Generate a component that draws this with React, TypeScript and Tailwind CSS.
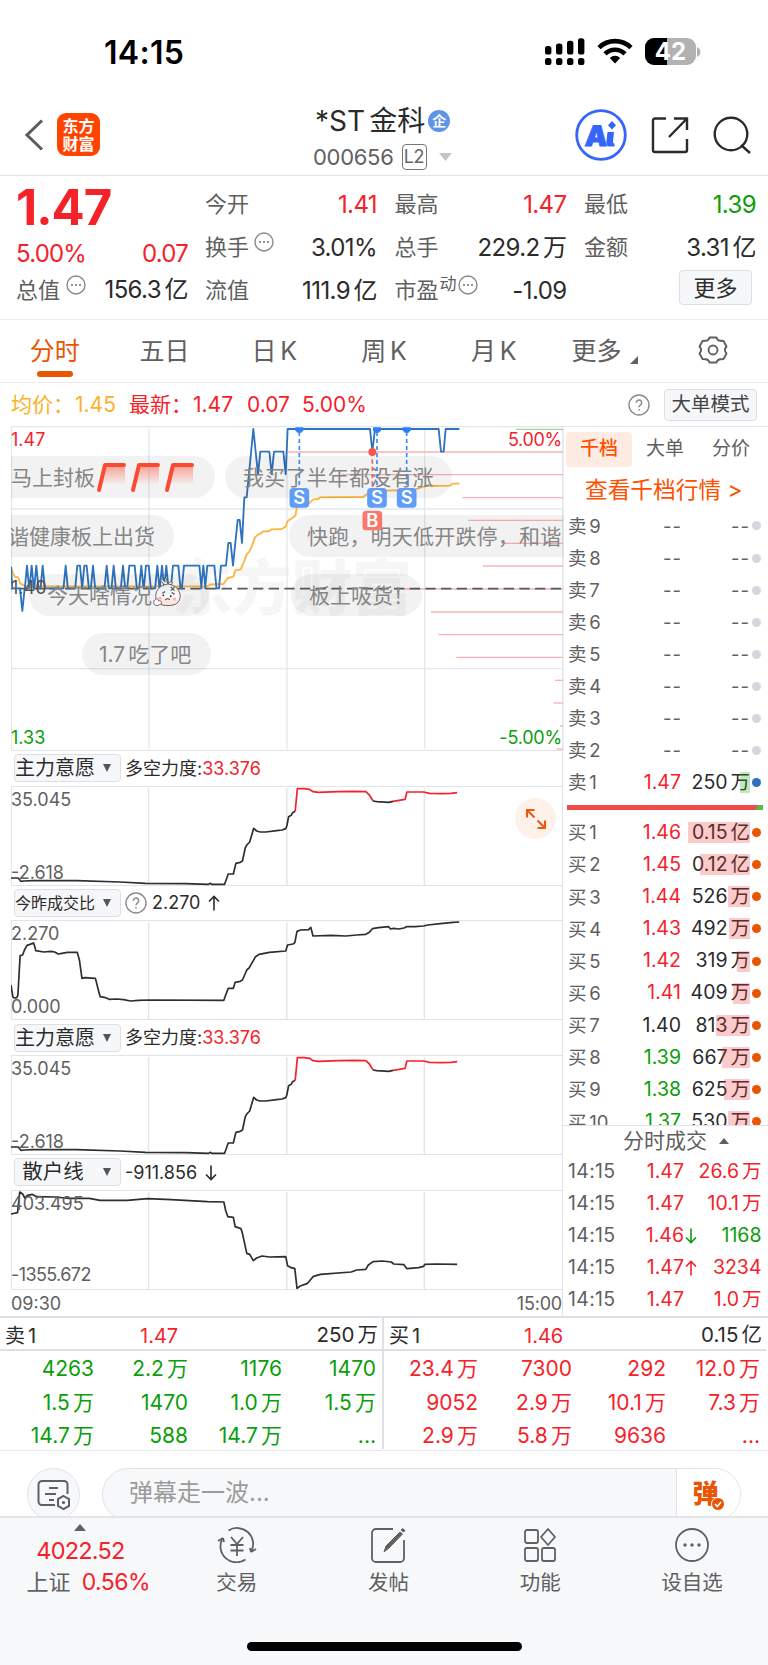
import { Fragment, type ReactNode } from 'react';
import clsx from 'clsx';

const UP = 'text-[#f5222a]';
const DOWN = 'text-[#0a9e0a]';
const INK = 'text-[#2b2b2b]';
const GRAY = 'text-[#606060]';

// 数字与汉字之间留一点空隙
const Txt = ({ children }: { children: string }) => {
  const parts = children.split(/(?<=[0-9A-Z])(?=[\u4e00-\u9fa5])|(?<=[\u4e00-\u9fa5])(?=[0-9A-Z])/);
  return (
    <>
      {parts.map((part, i) => (
        <Fragment key={i}>
          {i > 0 ? <span className="ml-[0.15em]">{part}</span> : part}
        </Fragment>
      ))}
    </>
  );
};

const DotsIcon = ({ className }: { className?: string }) => (
  <svg viewBox="0 0 20 20" className={clsx('h-5 w-5 shrink-0', className)} fill="none">
    <circle cx="10" cy="10" r="9" stroke="#8a8a8a" strokeWidth="1.4" />
    <circle cx="6" cy="10" r="1.1" fill="#777" />
    <circle cx="10" cy="10" r="1.1" fill="#777" />
    <circle cx="14" cy="10" r="1.1" fill="#777" />
  </svg>
);

const HelpIcon = () => (
  <svg viewBox="0 0 22 22" className="h-[22px] w-[22px] shrink-0" fill="none" stroke="#8a8a8a">
    <circle cx="11" cy="11" r="10" strokeWidth="1.4" />
    <path d="M8.3 8.7a2.7 2.7 0 1 1 4.2 2.2c-1 .7-1.5 1.1-1.5 2.4" strokeWidth="1.5" />
    <circle cx="11" cy="15.8" r=".9" fill="#8a8a8a" stroke="none" />
  </svg>
);

/* ---------- 状态栏 ---------- */
const StatusBar = () => (
  <div className="flex h-[90px] shrink-0 items-start justify-between pl-[104px] pr-[67px]">
    <span className="mt-[33px] text-[32px] font-semibold leading-10 tracking-[0.3px] text-black">14:15</span>
    <div className="mt-[38px] flex items-start">
      <svg viewBox="0 0 40 28" className="mr-3 h-7 w-10">
        {[0, 11, 22, 33].map((x, i) => (
          <Fragment key={x}>
            <rect x={x} y={8 - i * 2.6} width="6.4" height={8.5 + i * 2.6} rx="2.6" />
            <rect x={x} y="20" width="6.4" height="7" rx="2.6" />
          </Fragment>
        ))}
      </svg>
      <svg viewBox="0 0 36 26" className="mr-3 h-[26px] w-9" fill="none" stroke="#000" strokeWidth="4.6">
        <path d="M2 9.6A23 23 0 0 1 34 9.6" />
        <path d="M8 15.8a14.3 14.3 0 0 1 20 0" />
        <path d="M18 25.5l-5.2-5.6a7.4 7.4 0 0 1 10.4 0z" fill="#000" stroke="none" />
      </svg>
      <div className="relative flex h-[27px] w-[51px] items-center justify-center overflow-hidden rounded-[9px] bg-[#b2b2b2]">
        <div className="absolute inset-y-0 left-0 w-[22px] bg-black" />
        <span className="relative text-[24px] font-bold leading-none text-white">42</span>
      </div>
      <svg viewBox="0 0 4 10" className="ml-px mt-[9px] h-[10px] w-1">
        <path d="M0 0c2.2.8 3.4 2.6 3.4 5S2.2 9.2 0 10z" fill="#b2b2b2" />
      </svg>
    </div>
  </div>
);

/* ---------- 标题栏 ---------- */
const Header = () => (
  <div className="relative flex h-[86px] shrink-0 items-start justify-between border-b border-[#e2e2e4] pl-[24px] pr-[17px]">
    <div className="flex items-center pt-[23px]">
      <svg viewBox="0 0 20 32" className="h-8 w-5" fill="none" stroke="#5c5c5c" strokeWidth="3">
        <path d="M18 1.5L3 16l15 14.5" />
      </svg>
      <div className="ml-[13px] flex h-[43px] w-[43px] flex-col items-center justify-center rounded-[9px] bg-[#ff4400] text-[16px] font-bold leading-[18px] text-white">
        <span>东方</span>
        <span>财富</span>
      </div>
    </div>
    <div className="absolute left-[315px] top-[15px]">
      <div className="flex items-center">
        <span className={clsx('whitespace-nowrap text-[28px] leading-8', INK)}>
          <Txt>*ST金科</Txt>
        </span>
        <span className="ml-[3px] flex h-[22px] w-[22px] items-center justify-center rounded-full bg-[#6093ea] text-[14px] font-bold leading-none text-white">
          企
        </span>
      </div>
      <div className="-ml-[2px] mt-[6px] flex items-center">
        <span className={clsx('text-[22px] leading-7 tracking-[-0.3px]', GRAY)}>000656</span>
        <span className="ml-2 flex h-[26px] w-[25px] items-center justify-center rounded border-[1.5px] border-[#777] text-[18px] leading-none tracking-tight text-[#666]">
          L2
        </span>
        <svg viewBox="0 0 13 8" className="ml-3 h-2 w-[13px]">
          <path d="M0 0h13L6.5 8z" fill="#c4c4c4" />
        </svg>
      </div>
    </div>
    <div className="flex items-center pt-[19px]">
      <svg viewBox="0 0 52 52" className="mr-6 h-[52px] w-[52px]">
        <circle cx="26" cy="26" r="24.3" fill="none" stroke="#3565fb" strokeWidth="2.8" />
        <text x="10" y="37" fontFamily="Inter" fontSize="28" fontWeight="900" fill="#3565fb" stroke="#3565fb" strokeWidth="1" transform="skewX(-4) translate(2 0)">A</text>
        <path d="M32.5 23h6.500l-1 10q0 1.500 1.500 1.500v3h-5q-3.500 0-3.200-4z" fill="#3565fb" />
        <path d="M37 12l4 4.200-4 4.200-4-4.200z" fill="#3565fb" />
      </svg>
      <svg viewBox="0 0 38 38" className="mr-6 h-[38px] w-[38px]" fill="none" stroke="#2b2b2b" strokeWidth="2.400">
        <path d="M15 2.500H4a2 2 0 0 0-2 2V34a2 2 0 0 0 2 2h30a2 2 0 0 0 2-2V23" />
        <path d="M23 2.500h13V14M36 2.500L18 21" />
      </svg>
      <svg viewBox="0 0 38 38" className="h-[38px] w-[38px]" fill="none" stroke="#2b2b2b" strokeWidth="2.400">
        <circle cx="18" cy="18" r="16.300" />
        <path d="M28 29l9 8" />
      </svg>
    </div>
  </div>
);

/* ---------- 行情摘要 ---------- */
type QuoteCell = { label: ReactNode; value: string; color?: string };

const QUOTES: QuoteCell[][] = [
  [
    { label: '今开', value: '1.41', color: UP },
    {
      label: (
        <>
          换手
          <DotsIcon className="-mt-3 ml-[5px]" />
        </>
      ),
      value: '3.01%',
    },
    { label: '流值', value: '111.9亿' },
  ],
  [
    { label: '最高', value: '1.47', color: UP },
    { label: '总手', value: '229.2万' },
    {
      label: (
        <>
          市盈
          <span className="-mt-3 ml-px text-[17px] leading-none">动</span>
          <DotsIcon className="-mt-3 ml-px" />
        </>
      ),
      value: '-1.09',
    },
  ],
  [
    { label: '最低', value: '1.39', color: DOWN },
    { label: '金额', value: '3.31亿' },
  ],
];

const QuoteRow = ({ label, value, color = INK }: QuoteCell) => (
  <div className="flex h-[43px] items-center justify-between">
    <span className={clsx('flex items-center text-[22px]', GRAY)}>{label}</span>
    <span className={clsx('whitespace-nowrap text-[24px] tracking-[-0.6px]', color)}>
      <Txt>{value}</Txt>
    </span>
  </div>
);

const QuoteSummary = () => (
  <div className="flex h-[144px] shrink-0 border-b border-[#ececee] pl-4 pr-3 pt-[7px]">
    <div className="w-[172px]">
      <div className={clsx('mt-px h-[48px] text-[49px] font-bold leading-[48px] tracking-[-1px]', UP)}>1.47</div>
      <div className={clsx('mt-[8px] flex h-[28px] items-center justify-between text-[24px] tracking-[-0.8px]', UP)}>
        <span>5.00%</span>
        <span>0.07</span>
      </div>
      <div className="flex h-[44px] items-center justify-between">
        <span className={clsx('flex items-center text-[22px]', GRAY)}>
          总值
          <DotsIcon className="-mt-[10px] ml-[6px]" />
        </span>
        <span className={clsx('whitespace-nowrap text-[24px] tracking-[-0.6px]', INK)}>
          <Txt>156.3亿</Txt>
        </span>
      </div>
    </div>
    <div className="ml-[17px] grid flex-1 grid-cols-[172px_172px_172px] gap-x-[17.5px]">
      {QUOTES.map((col, i) => (
        <div key={i}>
          {col.map((cell) => (
            <QuoteRow key={cell.value} {...cell} />
          ))}
          {i === 2 && (
            <div className="mr-1 mt-[1px] flex justify-end">
              <button className={clsx('h-[35px] w-[73px] rounded border border-[#dcdfe5] bg-[#f6f7f9] text-[22px] leading-none', INK)}>
                更多
              </button>
            </div>
          )}
        </div>
      ))}
    </div>
  </div>
);

/* ---------- 周期切换 ---------- */
const PERIODS = ['五日', '日K', '周K', '月K'];

const PeriodTabs = () => (
  <div className="grid h-[63px] shrink-0 grid-cols-7 border-b border-[#ececee] text-[25px]">
    <div className="flex flex-col items-center">
      <span className="mt-[12px] leading-[38px] text-[#ea5504]">分时</span>
      <span className="mt-px h-[6px] w-9 rounded-full bg-[#ea5504]" />
    </div>
    {PERIODS.map((p) => (
      <div key={p} className="mt-[12px] text-center leading-[38px] text-[#606060]">
        <Txt>{p}</Txt>
      </div>
    ))}
    <div className="mt-[12px] flex justify-center pl-[3px] leading-[38px] text-[#606060]">
      更多
      <svg viewBox="0 0 8 8" className="ml-[9px] mt-[24px] h-2 w-2">
        <path d="M8 0v8H0z" fill="#606060" />
      </svg>
    </div>
    <div className="flex justify-center pt-[16px]">
      <svg viewBox="0 0 30 28" className="h-7 w-[30px]" fill="none" stroke="#606060" strokeWidth="1.900">
        <path d="M11.500 1.500h7q1 3.500 4.200 3.300l2.800.2 3 5.500q-3.200 3.500 0 7l-3 5.500-2.800.2q-3.200-.2-4.200 3.300h-7q-1-3.500-4.200-3.300l-2.800-.2-3-5.500q3.200-3.500 0-7l3-5.500 2.800-.2q3.200.2 4.200-3.300z" strokeLinejoin="round" />
        <circle cx="15" cy="14" r="4.500" />
      </svg>
    </div>
  </div>
);

const PriceInfo = () => (
  <div className="flex h-[43px] shrink-0 items-center pl-[11px] pr-[11px] text-[21px]">
    <span className="w-[64px] text-[#fbb12c]">均价：</span>
    <span className="w-[54px] text-[#fbb12c]">1.45</span>
    <span className={clsx('flex', UP)}>
      <span className="w-[64px]">最新：</span>
      <span className="w-[54px]">1.47</span>
      <span className="w-[55px]">0.07</span>
      <span>5.00%</span>
    </span>
    <div className="ml-auto flex items-center gap-[14px]">
      <HelpIcon />
      <button className="h-[32px] w-[93px] rounded border border-[#dcdfe5] bg-[#f6f7f9] text-[19.5px] leading-none text-[#444]">
        大单模式
      </button>
    </div>
  </div>
);

/* ---------- 分时主图 ---------- */
// 每个尖峰 [起, 止]，价格在 1.40 与 1.41 之间来回
const SPIKES = [
  [81, 81], [95, 95], [109, 109], [128, 128], [197, 197], [232, 240], [253, 260], [279, 279],
  [320, 320], [341, 341], [369, 369], [388, 404], [424, 424], [438, 446], [472, 472], [486, 486],
  [499, 499], [519, 535], [552, 598], [610, 610], [622, 643],
];

const PRICE_LINE = [
  '33,440 37,505 60,505 67,573 74,505',
  ...SPIKES.map(([a, b]) => `${a - 6.5},505 ${a},437 ${b},437 ${b + 6.5},505`),
  '657,505 663,437 678,437 685,369 692,369 699,437 713,300 719,300 726,369 733,232 740,232 760,27 774,163',
  '781,95 808,95 815,163 822,95 850,95 857,163 863,27 1110,27 1117,95 1125,27 1316,27 1323,95 1331,95 1337,27 1378,27',
].join(' ');

const AVG_LINE =
  '33,440 40,462 45,470 54,472 60,490 66,493 75,499 620,499 635,493 670,492 683,474 700,470 706,451 722,448 730,430 740,403 748,395 755,380 765,352 775,343 783,340 787,335 808,333 815,328 845,327 857,320 863,303 880,292 887,285 890,262 925,252 932,245 940,238 955,237 960,232 1090,231 1098,224 1125,222 1155,212 1240,210 1255,205 1275,198 1350,197 1357,191 1378,191';

// 右侧筹码横线 [起点x, y]
const DEPTH = [
  [863, 96], [1025, 164], [1387, 233], [1405, 301], [1505, 370], [1449, 438], [1210, 507],
  [1293, 576], [1315, 644], [1369, 712], [1665, 781], [1660, 849], [1680, 918], [1670, 987],
];

const Flag = () => (
  <svg viewBox="0 0 34 32" className="h-8 w-[34px] shrink-0">
    <defs>
      <linearGradient id="flag" x1="0" y1="0" x2="0" y2="1">
        <stop offset="0" stopColor="#ff6a55" stopOpacity=".65" />
        <stop offset="1" stopColor="#ff6a55" stopOpacity="0" />
      </linearGradient>
    </defs>
    <path d="M9 3h20v21H5z" fill="url(#flag)" />
    <path d="M3 29L9 4h19" fill="none" stroke="#fb4a34" strokeWidth="4" strokeLinecap="round" strokeLinejoin="round" />
  </svg>
);

const RadishEmoji = () => (
  <svg viewBox="0 0 32 32" className="h-[31px] w-[30px] shrink-0" stroke="#6b5850" strokeWidth="1">
    <defs>
      <linearGradient id="radish" x1="0" y1="0" x2="0" y2="1">
        <stop offset="0" stopColor="#dcebf0" />
        <stop offset=".55" stopColor="#fafafa" />
        <stop offset="1" stopColor="#fbd9d6" />
      </linearGradient>
    </defs>
    <path d="M14 8C8 3 8 1 11 2l3 3c-1-5 1-6 2-1l1 3c3-4 7-3 3 1" fill="#e4f1f2" />
    <path d="M17 7c9 1 13 7 13 13 0 7-5 10-13 10S4 27 4 20C4 13 9 8 17 7z" fill="url(#radish)" />
    <path d="M2 25c3-4 5-2 5 0 4-1 4 3 1 4-3 2-7 1-6-4z" fill="#fff" />
    <path d="M11 17l3-2M21 16l3 2M20 10l4 4m0-4l-4 4M14 24q3-3 5 0" fill="none" strokeWidth="1.400" />
    <circle cx="12" cy="19" r="1" fill="#333" stroke="none" />
    <circle cx="20" cy="20" r="1" fill="#333" stroke="none" />
    <circle cx="8.500" cy="22" r="1.800" fill="#ffb3b3" stroke="none" />
    <circle cx="24" cy="23" r="1.800" fill="#ffb3b3" stroke="none" />
  </svg>
);

const Danmaku = ({ className, children }: { className: string; children: ReactNode }) => (
  <div
    className={clsx(
      'absolute flex h-[42px] items-center whitespace-nowrap rounded-full bg-black/5 text-[21px] leading-none text-[#868686]',
      className,
    )}
  >
    {children}
  </div>
);

const TradeMark = ({ x, y, label, color }: { x: number; y: number; label: string; color: string }) => (
  <g>
    <rect x={x - 29.5} y={y} width="59" height="59" rx="11" fill={color} />
    <text x={x} y={y + 49} textAnchor="middle" fontSize="55" fontWeight="600" fontFamily="Inter" fill="#fff">
      {label}
    </text>
  </g>
);

const MainChart = () => (
  <div className="relative h-[324px] w-[553px] overflow-hidden">
    <div className="absolute left-[161px] top-[122px] whitespace-nowrap text-[60px] font-black leading-[80px] text-[#f6f6f6]">
      东方财富
    </div>
    <svg viewBox="33 18 1659 972" className="absolute inset-0 h-[324px] w-[553px]" fill="none">
      <g stroke="#e3e7ee" strokeWidth="4">
        <path d="M33 20H1689M34.500 18V990M33 267H1689M33 746H1689M447 27V986M861 27V986M1274 27V986M1689 18V990" />
      </g>
      <path d="M1548 28H1689" stroke="#9bd69b" strokeWidth="4" />
      {DEPTH.map(([x, y]) => (
        <path key={y} d={`M${x} ${y}H1689`} stroke="#fcb1b5" strokeWidth="4" />
      ))}
      <path d="M33 506H1689" stroke="#5a5a5a" strokeWidth="5" strokeDasharray="31 16" strokeDashoffset="26" />
      <polyline points={AVG_LINE} stroke="#fbb73c" strokeWidth="5.500" strokeLinejoin="round" />
      <polyline points={PRICE_LINE} stroke="#2f72bd" strokeWidth="5.500" strokeLinejoin="round" />
    </svg>
    <span className={clsx('absolute left-0 top-[2px] text-[18px] leading-6', UP)}>1.47</span>
    <span className={clsx('absolute right-[2px] top-[2px] text-[18px] leading-6 tracking-[-0.3px]', UP)}>5.00%</span>
    <span className="absolute left-0 top-[150px] text-[18px] leading-6 text-[#555]">1.40</span>
    <span className={clsx('absolute bottom-0 left-0 text-[18px] leading-6', DOWN)}>1.33</span>
    <span className={clsx('absolute bottom-0 right-[2px] text-[18px] leading-6 tracking-[-0.2px]', DOWN)}>-5.00%</span>

    <Danmaku className="-left-5 top-[30px] w-[224px] pl-[20px]">
      马上封板
      <span className="ml-[1px] flex">
        <Flag />
        <Flag />
        <Flag />
      </span>
    </Danmaku>
    <Danmaku className="left-[214px] top-[30px] w-[227px] pl-[18px] tracking-[0.2px]">我买了半年都没有涨</Danmaku>
    <Danmaku className="-left-8 top-[89px] w-[195px] pl-[29px]">谐健康板上出货</Danmaku>
    <Danmaku className="left-[278px] top-[89px] w-[330px] pl-[18px] tracking-[0.2px]">快跑，明天低开跌停，和谐</Danmaku>
    <Danmaku className="left-[18px] top-[148px] w-[180px] pl-[18px]">
      今天啥情况
      <span className="mt-[-5px]">
        <RadishEmoji />
      </span>
    </Danmaku>
    <Danmaku className="left-[280px] top-[148px] w-[131px] pl-[18px]">板上吸货！</Danmaku>
    <Danmaku className="left-[71px] top-[207px] w-[129px] pl-[17px]">
      <Txt>1.7吃了吧</Txt>
    </Danmaku>

    <svg viewBox="33 18 1659 972" className="absolute inset-0 h-[324px] w-[553px]" fill="none">
      <path d="M1117 96V272" stroke="#f4645a" strokeWidth="5" strokeDasharray="13 9" />
      <circle cx="1117" cy="96" r="12" fill="#f4594e" />
      {[898, 1131, 1220].map((x) => (
        <g key={x}>
          <path d={`M${x} 36V204`} stroke="#3f87f5" strokeWidth="5" strokeDasharray="12 9" />
          <path d={`M${x - 12} 22h24v9l-6 7h-12l-6-7z`} fill="#2f80f5" />
          <TradeMark x={x} y={204} label="S" color="#5f9df8" />
        </g>
      ))}
      <TradeMark x={1117} y={272} label="B" color="#f9786c" />
    </svg>
  </div>
);

/* ---------- 副图指标 ---------- */
type Line = { points: string; color?: string };

type IndicatorProps = {
  name: string;
  nameClass?: string;
  info: ReactNode;
  max: string;
  min: string;
  minClass?: string;
  lines: Line[];
};

const FORCE_LINES: Line[] = [
  {
    points:
      '0,276 20,276 27,286 35,285 60,284 180,284 300,288 370,292 480,293 543,295 547,292 552,295 587,295 597,264 611,264 618,232 630,229 636,225 644,185 648,177 656,168 667,127 675,135 685,138 700,138 730,134 745,132 755,128 758,120 763,92 770,88 774,80 781,76',
  },
  { points: '781,76 787,8 806,8 820,10 830,17 845,19 900,17 940,16 975,17 985,27 995,45', color: '#f5222a' },
  { points: '995,45 1005,47 1038,49 1050,46' },
  { points: '1050,46 1083,40 1088,18 1134,18 1150,22 1180,23 1210,22 1226,20', color: '#f5222a' },
];

const RATIO_LINES: Line[] = [
  {
    points:
      '0,195 5,230 8,234 16,233 19,225 25,107 32,105 37,90 44,76 50,74 62,69 66,82 68,92 90,96 110,94 120,96 130,102 140,100 155,97 182,97 188,120 195,175 203,173 232,175 240,210 245,230 260,233 270,238 290,237 310,239 328,243 350,241 380,240 585,241 590,225 597,205 611,205 616,187 630,184 636,180 648,150 655,143 672,110 682,103 710,97 755,93 760,75 775,72 780,68 786,34 796,30 818,29 824,22 830,48 880,46 920,48 950,45 975,43 985,37 993,26 1010,23 1038,20 1043,27 1052,25 1065,27 1080,24 1087,20 1110,20 1134,18 1145,15 1180,11 1215,7 1232,6',
  },
];

const RETAIL_LINES: Line[] = [
  {
    points:
      '0,72 18,68 24,6 32,12 38,24 45,16 58,13 70,20 120,21 160,25 215,25 245,31 320,31 375,26 440,29 540,35 585,36 590,62 596,80 611,82 616,110 632,116 636,130 648,190 656,193 666,212 675,204 690,198 710,201 755,200 760,227 770,233 780,236 786,295 795,288 815,280 830,260 850,253 935,246 950,240 975,238 982,225 995,215 1020,213 1045,216 1052,222 1080,224 1088,236 1120,233 1134,229 1137,223 1170,222 1226,223',
  },
];

const Indicator = ({ name, nameClass = 'text-[20px]', info, max, min, minClass, lines }: IndicatorProps) => (
  <div className="h-[134.7px] border-t border-[#dfe3e9]">
    <div className="flex h-[34.5px] items-center pl-[3px]">
      <div className="flex h-[28px] w-[107px] items-center rounded border border-[#dcdfe5] bg-[#f6f7f9]">
        <span className={clsx('w-[80px] whitespace-nowrap text-center leading-none', nameClass, INK)}>{name}</span>
        <svg viewBox="0 0 8 8" className="ml-[8px] h-2 w-2">
          <path d="M0 0h8L4 8z" fill="#555" />
        </svg>
      </div>
      <div className={clsx('ml-[4px] mt-px flex items-center text-[18px] leading-none', INK)}>{info}</div>
    </div>
    <div className="relative h-[100px] border-l border-t border-[#e1e5eb]">
      <svg viewBox="0 0 1517 300" preserveAspectRatio="none" className="absolute -left-px -top-px h-[100px] w-[552px]" fill="none">
        <path d="M378 7V297M758 7V297M1136 7V297" stroke="#e1e6ee" strokeWidth="4" />
        {lines.map((line) => (
          <polyline
            key={line.points}
            points={line.points}
            stroke={line.color ?? '#2e2e2e'}
            strokeWidth="1.700"
            strokeLinejoin="round"
            vectorEffect="non-scaling-stroke"
          />
        ))}
      </svg>
      <span className={clsx('absolute -left-px top-[1px] text-[18px] leading-6', GRAY)}>{max}</span>
      <span className={clsx('absolute -left-px text-[18px] leading-6', minClass ?? 'bottom-[1px]', GRAY)}>{min}</span>
    </div>
  </div>
);

const ForceInfo = () => (
  <>
    多空力度:<span className={UP}>33.376</span>
  </>
);

const Arrow = ({ down, className }: { down?: boolean; className?: string }) => (
  <svg viewBox="0 0 12 16" className={clsx('h-4 w-3', down && 'rotate-180', className)} fill="none" stroke="currentColor" strokeWidth="1.600">
    <path d="M6 15.500V1.500M1 6.500l5-5 5 5" />
  </svg>
);

const Charts = () => (
  <div className="relative ml-[11px] w-[552px] shrink-0 border-r border-[#e1e5eb]">
    <MainChart />
    <Indicator name="主力意愿" info={<ForceInfo />} max="35.045" min="-2.618" lines={FORCE_LINES} />
    <Indicator
      name="今昨成交比"
      nameClass="text-[16px]"
      info={
        <>
          <HelpIcon />
          <span className="ml-[5px]">2.270</span>
          <Arrow className="ml-2" />
        </>
      }
      max="2.270"
      min="0.000"
      lines={RATIO_LINES}
    />
    <Indicator name="主力意愿" info={<ForceInfo />} max="35.045" min="-2.618" lines={FORCE_LINES} />
    <Indicator
      name="散户线"
      nameClass="text-[20.5px] pr-1"
      info={
        <>
          -911.856
          <Arrow down className="ml-2" />
        </>
      }
      max="403.495"
      min="-1355.672"
      minClass="bottom-[3px] tracking-[-0.6px]"
      lines={RETAIL_LINES}
    />
    <div className={clsx('flex h-7 items-center justify-between border-t border-[#dfe3e9] text-[18px]', GRAY)}>
      <span>09:30</span>
      <span className="tracking-[-0.2px]">15:00</span>
    </div>
    <div className="absolute right-[6px] top-[372px] flex h-[41px] w-[41px] items-center justify-center rounded-full bg-[#fef1ea]">
      <svg viewBox="0 0 20 20" className="h-5 w-5" fill="none" stroke="#ea5a0c" strokeWidth="2">
        <path d="M1 8.500V1h7.500M1 1l7.500 7.500M19 11.500V19h-7.500M19 19l-7.500-7.500" />
      </svg>
    </div>
  </div>
);

/* ---------- 五档盘口 ---------- */
type Level = { name: string; price: string; volume: string; color: string; bar: number };

const ASKS = ['卖9', '卖8', '卖7', '卖6', '卖5', '卖4', '卖3', '卖2'];

const BIDS: Level[] = [
  { name: '买1', price: '1.46', volume: '0.15亿', color: UP, bar: 62 },
  { name: '买2', price: '1.45', volume: '0.12亿', color: UP, bar: 50 },
  { name: '买3', price: '1.44', volume: '526万', color: UP, bar: 22 },
  { name: '买4', price: '1.43', volume: '492万', color: UP, bar: 21 },
  { name: '买5', price: '1.42', volume: '319万', color: UP, bar: 13.5 },
  { name: '买6', price: '1.41', volume: '409万', color: UP, bar: 17.5 },
  { name: '买7', price: '1.40', volume: '813万', color: INK, bar: 34.5 },
  { name: '买8', price: '1.39', volume: '667万', color: DOWN, bar: 28 },
  { name: '买9', price: '1.38', volume: '625万', color: DOWN, bar: 26.5 },
  { name: '买10', price: '1.37', volume: '530万', color: DOWN, bar: 22 },
];

const DEALS = [
  { price: '1.47', volume: '26.6万', color: UP },
  { price: '1.47', volume: '10.1万', color: UP },
  { price: '1.46', volume: '1168', color: DOWN, trend: 'down' },
  { price: '1.47', volume: '3234', color: UP, trend: 'up' },
  { price: '1.47', volume: '1.0万', color: UP },
];

const LevelRow = ({ name, price, volume, color, bar, sell }: Level & { sell?: boolean }) => (
  <div className="flex h-[32.15px] items-center pl-[5px] text-[19.5px] leading-none">
    <span className={clsx('w-[51px] whitespace-nowrap text-[18.5px]', GRAY)}>
      <Txt>{name}</Txt>
    </span>
    <span className={clsx('w-[62px] text-right', color)}>{price}</span>
    <span className={clsx('relative flex h-[21px] w-[69px] items-center justify-end whitespace-nowrap', INK)}>
      <span>
        <Txt>{volume}</Txt>
      </span>
      <span
        className={clsx('absolute inset-y-0 right-0', sell ? 'bg-[#30b030]/30' : 'bg-[#f03030]/25')}
        style={{ width: bar }}
      />
    </span>
    <span className={clsx('ml-[2px] h-[9px] w-[9px] rounded-full', sell ? 'bg-[#2f70c0]' : 'bg-[#ea5504]')} />
  </div>
);

const OrderBook = () => (
  <div className="flex min-w-0 flex-1 flex-col">
    <div className="flex h-[41px] items-end border-t border-[#e3e7ee] pl-[3px] text-[19px]">
      <span className="flex h-[35px] w-[66px] items-center justify-center rounded-[4px] bg-[#feece3] font-medium text-[#ff5000]">
        千档
      </span>
      <span className={clsx('flex h-[35px] w-[66px] items-center justify-center', GRAY)}>大单</span>
      <span className={clsx('flex h-[35px] w-[66px] items-center justify-center', GRAY)}>分价</span>
    </div>
    <div className="h-[43px] whitespace-nowrap pl-[22px] text-[22.7px] leading-[46px] text-[#ff5000]">
      查看千档行情 &gt;
    </div>
    {ASKS.map((name) => (
      <div key={name} className={clsx('flex h-[32.15px] items-center pl-[5px] text-[18.5px] leading-none', GRAY)}>
        <span className="w-[51px]">
          <Txt>{name}</Txt>
        </span>
        <span className="w-[63px] text-right tracking-[1px]">--</span>
        <span className="w-[68px] text-right tracking-[1px]">--</span>
        <span className="ml-[2px] h-[9px] w-[9px] rounded-full bg-[#d4d7de]" />
      </div>
    ))}
    <LevelRow name="卖1" price="1.47" volume="250万" color={UP} bar={10.5} sell />
    <div className="mb-[6px] ml-[4px] mt-[7px] flex h-[5px] w-[196px] shrink-0 bg-[#ee4b4b]">
      <svg viewBox="0 0 8 5" className="ml-auto h-[5px] w-[8px]">
        <path d="M3 0h5v5H0z" fill="#5cb947" />
      </svg>
    </div>
    <div className="h-[310px] shrink-0 overflow-hidden border-b border-[#dfe3e9]">
      {BIDS.map((level) => (
        <LevelRow key={level.name} {...level} />
      ))}
    </div>
    <div className={clsx('flex h-[29px] items-center pl-[60px] text-[21px]', GRAY)}>
      分时成交
      <svg viewBox="0 0 10 6" className="ml-3 h-[6px] w-[10px]">
        <path d="M0 6h10L5 0z" fill="#606060" />
      </svg>
    </div>
    {DEALS.map((deal, i) => (
      <div key={i} className="flex h-[32.2px] items-center pl-[5px] text-[19.5px] leading-none">
        <span className={clsx('w-[56px] tracking-[0.3px]', GRAY)}>14:15</span>
        <span className={clsx('w-[60px] text-right', UP)}>{deal.price}</span>
        <span className={clsx('w-[13px]', deal.trend === 'down' ? DOWN : UP)}>
          {deal.trend && <Arrow down={deal.trend === 'down'} className="ml-px" />}
        </span>
        <span className={clsx('w-[64.5px] whitespace-nowrap text-right', deal.color)}>
          <Txt>{deal.volume}</Txt>
        </span>
      </div>
    ))}
  </div>
);

/* ---------- 买一卖一队列 ---------- */
const SELL_QUEUE = ['4263', '2.2万', '1176', '1470', '1.5万', '1470', '1.0万', '1.5万', '14.7万', '588', '14.7万', '...'];
const BUY_QUEUE = ['23.4万', '7300', '292', '12.0万', '9052', '2.9万', '10.1万', '7.3万', '2.9万', '5.8万', '9636', '...'];

type QueueProps = {
  className: string;
  name: string;
  price: string;
  volume: string;
  items: string[];
  color: string;
};

const Queue = ({ className, name, price, volume, items, color }: QueueProps) => (
  <div className={className}>
    <div className={clsx('flex h-[33px] items-center border-b-2 border-[#dde0e6] pl-[5px] pr-[4px] pt-[4px]', INK)}>
      <span className="w-[135px]">
        <Txt>{name}</Txt>
      </span>
      <span className={UP}>{price}</span>
      <span className="ml-auto text-[20.5px]">
        <Txt>{volume}</Txt>
      </span>
    </div>
    <div className={clsx('grid grid-cols-4 pr-[6px] pt-[1px] text-[21px]', color)}>
      {items.map((item, i) => (
        <span key={i} className="flex h-[33.5px] items-center justify-end whitespace-nowrap">
          <span>
            <Txt>{item}</Txt>
          </span>
        </span>
      ))}
    </div>
  </div>
);

const Queues = () => (
  <div className="flex h-[135px] shrink-0 overflow-hidden border-b border-t-2 border-b-[#ebebed] border-t-[#dde0e6] text-[20px]">
    <Queue className="w-[382px]" name="卖1" price="1.47" volume="250万" items={SELL_QUEUE} color={DOWN} />
    <div className="h-[131px] w-[2px] bg-[#dde0e6]" />
    <Queue className="mr-[2px] w-[382px]" name="买1" price="1.46" volume="0.15亿" items={BUY_QUEUE} color={UP} />
  </div>
);

/* ---------- 弹幕输入 ---------- */
const DanmakuInput = () => (
  <div className="flex h-[65px] shrink-0 overflow-hidden pl-[27px] pt-[17px]">
    <div className="flex h-[53px] w-[53px] items-center justify-center rounded-full border border-[#e0e3e9] bg-[#f7f8fa]">
      <svg viewBox="0 0 34 32" className="ml-px h-8 w-[34px]" fill="none" stroke="#606060" strokeWidth="2">
        <path d="M18 26H5a3.500 3.500 0 0 1-3.500-3.500v-17A3.500 3.500 0 0 1 5 2h22a3.500 3.500 0 0 1 3.500 3.500V15" />
        <path d="M12 9h9M8 15h11M12 21h5" />
        <path d="M26.500 17l5.500 3.200v6.600L26.500 30 21 26.800v-6.600z" />
        <circle cx="26.500" cy="23.500" r="1.600" fill="#606060" stroke="none" />
      </svg>
    </div>
    <div className="ml-[22px] flex h-[53px] w-[639px] overflow-hidden rounded-full border border-[#e0e3e9] bg-[#f7f8fa]">
      <span className="flex-1 pl-[26px] text-[24px] leading-[48px] text-[#9b9b9b]">弹幕走一波...</span>
      <div className="relative flex w-[64px] justify-center border-l border-[#e0e3e9] bg-white">
        <span className="mr-[6px] text-[26px] font-black leading-[50px] text-[#ea5504]">弹</span>
        <svg viewBox="0 0 14 14" className="absolute bottom-[9px] left-[34px] h-[14px] w-[14px]">
          <circle cx="7" cy="7" r="6.500" fill="#ea5504" stroke="#fff" />
          <path d="M4 7l2.300 2.500L10 5" fill="none" stroke="#fff" strokeWidth="1.600" />
        </svg>
      </div>
    </div>
  </div>
);

/* ---------- 底部导航 ---------- */
const NAV = [
  {
    label: '交易',
    icon: (
      <>
        <path d="M11.500 3.500A16 16 0 0 1 34.500 24M28.500 32.500A16 16 0 0 1 5.500 11.500" />
        <path d="M34 25l5-3M34 25l-1-4M6 11l-5 3M6 11l1 4" />
        <path d="M14 10l6 7 6-7M13.500 18h13M13.500 23.500h13M20 17v12" />
      </>
    ),
  },
  {
    label: '发帖',
    icon: (
      <>
        <path d="M25 2H8a4 4 0 0 0-4 4v25a4 4 0 0 0 4 4h24a4 4 0 0 0 4-4V13" />
        <path d="M16 25l2-6L32 5l2.500 2L21 21zM33 3l1.500-1.500 2.500 2L35.500 5z" fill="#606060" strokeWidth="1" />
      </>
    ),
  },
  {
    label: '功能',
    icon: (
      <>
        <rect x="5" y="3" width="13" height="13" rx="2" />
        <path d="M28 2l7 8-7 8-7-8z" strokeLinejoin="round" />
        <rect x="5" y="21" width="13" height="13" rx="2" />
        <rect x="22" y="21" width="13" height="13" rx="2" />
      </>
    ),
  },
  {
    label: '设自选',
    icon: (
      <>
        <circle cx="20" cy="18" r="16" />
        <circle cx="13" cy="18" r="1.700" fill="#606060" stroke="none" />
        <circle cx="20" cy="18" r="1.700" fill="#606060" stroke="none" />
        <circle cx="27" cy="18" r="1.700" fill="#606060" stroke="none" />
      </>
    ),
  },
];

const BottomNav = () => (
  <div className="flex h-[149px] shrink-0 flex-col items-center border-t-2 border-[#e4e5e9] bg-[#f7f8fa]">
    <div className="flex h-[83px] w-full pt-[6px]">
      <div className="flex w-[161px] flex-col items-center">
        <svg viewBox="0 0 12 7" className="h-[7px] w-3">
          <path d="M0 7h12L6 0z" fill="#606060" />
        </svg>
        <span className={clsx('mt-[6px] text-[23.5px] leading-7 tracking-[-0.8px]', UP)}>4022.52</span>
        <span className={clsx('mt-px flex items-center gap-[11px] pl-4 text-[22px] leading-8', GRAY)}>
          上证<span className={clsx('text-[23px] tracking-[-0.5px]', UP)}>0.56%</span>
        </span>
      </div>
      {NAV.map((item) => (
        <div key={item.label} className="flex w-[152px] flex-col items-center pt-[3px]">
          <svg viewBox="0 0 40 36" className="h-9 w-10" fill="none" stroke="#606060" strokeWidth="1.800">
            {item.icon}
          </svg>
          <span className={clsx('mt-[4px] text-[20.5px] leading-[32px]', GRAY)}>{item.label}</span>
        </div>
      ))}
    </div>
    <div className="mt-[41px] h-[9px] w-[275px] rounded-full bg-black" />
  </div>
);

const App = () => (
  <div className="flex h-[1665px] w-[768px] flex-col overflow-hidden bg-white font-['Inter','Noto_Sans_CJK_SC',sans-serif]">
    <StatusBar />
    <Header />
    <QuoteSummary />
    <PeriodTabs />
    <PriceInfo />
    <div className="flex h-[890px] shrink-0 overflow-hidden">
      <Charts />
      <OrderBook />
    </div>
    <Queues />
    <DanmakuInput />
    <BottomNav />
  </div>
);

export default App;
